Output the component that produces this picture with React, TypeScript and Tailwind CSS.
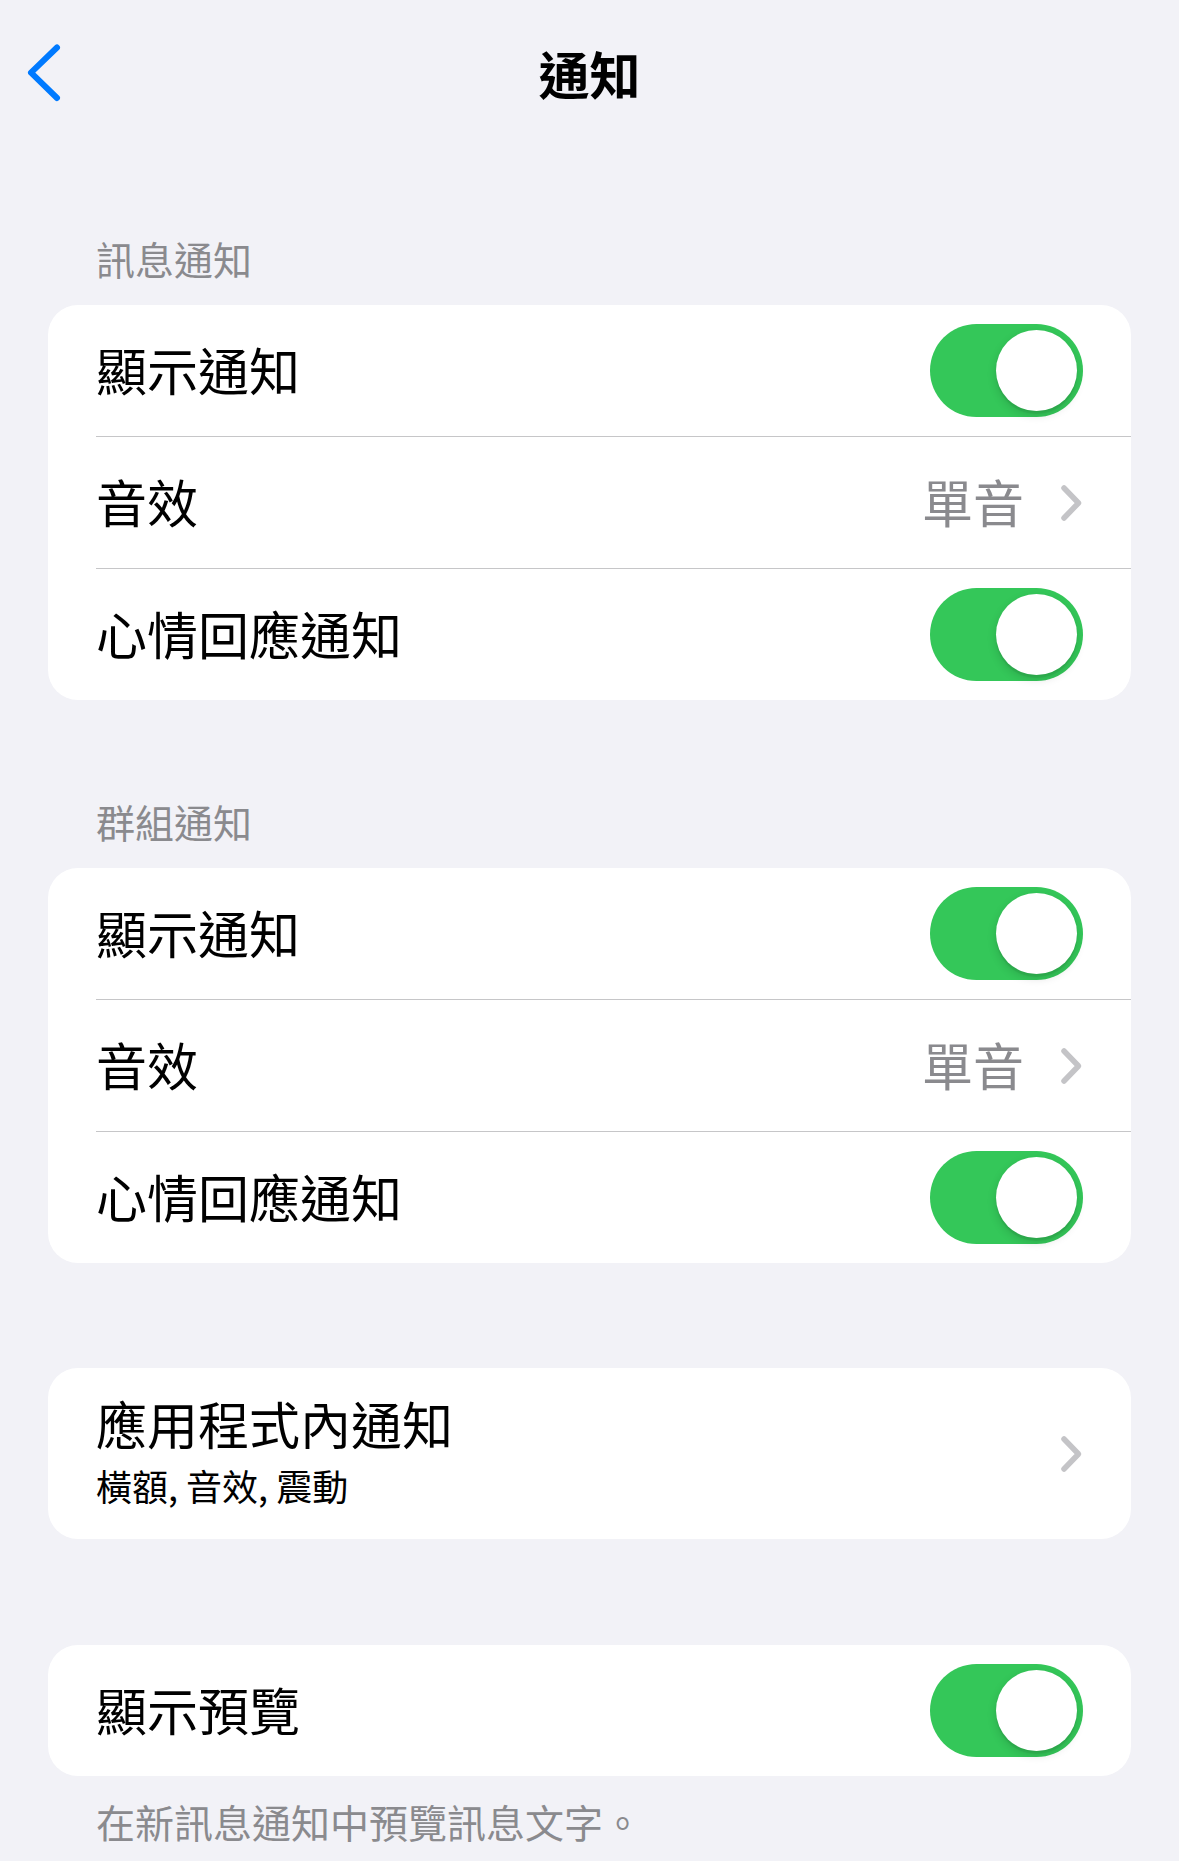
import React from 'react';

const FONT = '"Noto Sans CJK TC", "Noto Sans", sans-serif';

const Toggle: React.FC = () => (
  <div className="flex h-[93px] w-[153px] shrink-0 items-center justify-end rounded-full bg-[#34c759] p-[6px]">
    <div className="h-[81px] w-[81px] rounded-full bg-white shadow-[0_4px_10px_rgba(0,0,0,0.15),0_3px_1px_rgba(0,0,0,0.06)]" />
  </div>
);

const Chevron: React.FC = () => (
  <svg width="24" height="38" viewBox="0 0 24 38" className="shrink-0">
    <path
      d="M5 4 L19.5 19 L5 34"
      fill="none"
      stroke="#c4c4c7"
      strokeWidth="5.5"
      strokeLinecap="round"
      strokeLinejoin="round"
    />
  </svg>
);

const Divider: React.FC = () => <div className="ml-[48px] h-px bg-[#c6c6c8]" />;

const Row: React.FC<{ label: string; children: React.ReactNode }> = ({ label, children }) => (
  <div className="flex h-[131px] items-center justify-between px-[48px]">
    <span className="pb-[3px] text-[51px] leading-[51px] text-black">{label}</span>
    {children}
  </div>
);

const SoundValue: React.FC = () => (
  <div className="flex items-center">
    <span className="mr-[35px] pb-[3px] text-[51px] leading-[51px] text-[#8a8a8e]">單音</span>
    <Chevron />
  </div>
);

const SectionHeader: React.FC<{ title: string; className?: string }> = ({ title, className }) => (
  <div className={`px-[96px] text-[39px] leading-[39px] text-[#8a8a8e] ${className ?? ''}`}>{title}</div>
);

const NotifyCard: React.FC = () => (
  <div className="mx-[48px] overflow-hidden rounded-[30px] bg-white">
    <Row label="顯示通知">
      <Toggle />
    </Row>
    <Divider />
    <Row label="音效">
      <SoundValue />
    </Row>
    <Divider />
    <Row label="心情回應通知">
      <Toggle />
    </Row>
  </div>
);

export default function App() {
  return (
    <div className="min-h-[1861px] w-full bg-[#f2f2f7] pb-[20px]" style={{ fontFamily: FONT }}>
      {/* 導覽列 */}
      <div className="relative flex h-[146px] items-center justify-center">
        <svg
          width="40"
          height="66"
          viewBox="0 0 40 66"
          className="absolute left-[24px] top-[40px]"
        >
          <path
            d="M33 7.5 L7 32.7 L33 58"
            fill="none"
            stroke="#007aff"
            strokeWidth="6"
            strokeLinecap="round"
            strokeLinejoin="round"
          />
        </svg>
        <h1 className="text-[51px] font-semibold leading-[51px] text-black">通知</h1>
      </div>

      <SectionHeader title="訊息通知" className="mt-[93px] mb-[27px]" />
      <NotifyCard />

      <SectionHeader title="群組通知" className="mt-[102px] mb-[27px]" />
      <NotifyCard />

      <div className="mx-[48px] mt-[105px] flex h-[171px] items-center justify-between rounded-[30px] bg-white px-[48px]">
        <div className="flex flex-col pb-[7px]">
          <span className="text-[51px] leading-[51px] text-black">應用程式內通知</span>
          <span className="mt-[18px] text-[36px] leading-[36px] text-black">橫額, 音效, 震動</span>
        </div>
        <Chevron />
      </div>

      <div className="mx-[48px] mt-[106px] overflow-hidden rounded-[30px] bg-white">
        <Row label="顯示預覽">
          <Toggle />
        </Row>
      </div>
      <div className="mt-[26px] px-[96px] text-[39px] leading-[39px] text-[#8a8a8e]">
        在新訊息通知中預覽訊息文字。
      </div>
    </div>
  );
}
